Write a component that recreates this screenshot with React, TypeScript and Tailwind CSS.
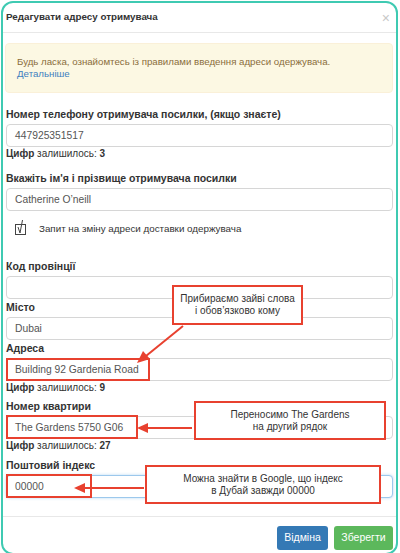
import React from "react";

const font = { fontFamily: '"Liberation Sans", Arial, sans-serif' };

function Label({ children, className = "" }: { children: React.ReactNode; className?: string }) {
  return (
    <div className={`h-[14px] text-[10.5px] leading-[14px] font-bold text-[#333] ${className}`}>
      {children}
    </div>
  );
}

function Input({
  value,
  className = "",
  focused = false,
}: {
  value?: string;
  className?: string;
  focused?: boolean;
}) {
  return (
    <div
      className={`h-[23px] rounded-[4px] border bg-white px-[8px] flex items-center text-[10.3px] text-[#555] ${
        focused
          ? "border-[#9cc8ec] shadow-[0_0_3px_rgba(102,175,233,0.5)]"
          : "border-[#d6d6d6]"
      } ${className}`}
    >
      {value}
    </div>
  );
}

function Hint({ n }: { n: number }) {
  return (
    <div className="h-[14px] text-[10px] leading-[14px] text-[#333]">
      <b>Цифр</b> залишилось: <b>{n}</b>
    </div>
  );
}

function Note({ lines, className }: { lines: string[]; className: string }) {
  return (
    <div
      className={`absolute border-2 border-[#e8412f] bg-white flex flex-col items-center justify-center text-[10px] leading-[12px] text-[#333] ${className}`}
    >
      {lines.map((l) => (
        <span key={l}>{l}</span>
      ))}
    </div>
  );
}

export default function App() {
  return (
    <div className="w-[400px] h-[553px] bg-white overflow-hidden" style={font}>
      <div className="relative ml-[1px] mt-[1px] w-[397px] h-[554px] rounded-[12px] border-2 border-[#3fcab2] bg-white overflow-hidden">
        {/* header */}
        <div className="h-[30px] flex items-center justify-between px-[3px] border-b border-[#e8e8e8]">
          <span className="text-[9.8px] font-bold text-[#333]">Редагувати адресу отримувача</span>
          <span className="text-[14px] leading-none text-[#c8c8c8] mr-[3px]">×</span>
        </div>

        <div className="px-[3px]">
          {/* alert */}
          <div className="mt-[10px] ml-[-1px] h-[50px] rounded-[4px] border border-[#faf0d8] bg-[#fcf8e3] pl-[11px] flex flex-col justify-center text-[9.7px] leading-[12px]">
            <span className="text-[#8a6d3b]">Будь ласка, ознайомтесь із правилами введення адреси одержувача.</span>
            <span className="text-[#3f7fbf]">Детальніше</span>
          </div>

          <Label className="mt-[14px]">Номер телефону отримувача посилки, (якщо знаєте)</Label>
          <Input className="mt-[3px]" value="447925351517" />
          <Hint n={3} />

          <Label className="mt-[10px]">Вкажіть ім'я і прізвище отримувача посилки</Label>
          <Input className="mt-[3px]" value="Catherine O’neill" />

          <div className="mt-[11px] h-[14px] flex items-center text-[9.8px] text-[#333]">
            <svg width="14" height="18" viewBox="0 0 14 18" className="ml-[8px] mb-[2px]">
              <rect x="1.5" y="5.5" width="10" height="10" fill="none" stroke="#444" strokeWidth="1" />
              <path d="M4 8 L6 14 L8.5 1" fill="none" stroke="#444" strokeWidth="1" />
            </svg>
            <span className="ml-[11px]">Запит на зміну адреси доставки одержувача</span>
          </div>

          <Label className="mt-[23px]">Код провінції</Label>
          <Input className="mt-[3px]" />

          <Label className="mt-[1px]">Місто</Label>
          <Input className="mt-[3px]" value="Dubai" />

          <Label className="mt-[1px]">Адреса</Label>
          <Input className="mt-[3px] text-[#333]" value="Building 92 Gardenia Road" />
          <Hint n={9} />

          <Label className="mt-[4px]">Номер квартири</Label>
          <Input className="mt-[3px] text-[#333]" value="The Gardens 5750 G06" />
          <Hint n={27} />

          <Label className="mt-[5px]">Поштовий індекс</Label>
          <Input className="mt-[3px] text-[#333]" value="00000" focused />
        </div>

        {/* footer */}
        <div className="mt-[18px] border-t border-[#e8e8e8] flex justify-end gap-[6px] pt-[9px] pr-[3px]">
          <button className="h-[24px] w-[51px] rounded-[3px] bg-[#3479b5] text-[10.5px] text-white">Відміна</button>
          <button className="h-[24px] w-[59px] rounded-[3px] bg-[#5cb85c] text-[10.5px] text-white">Зберегти</button>
        </div>

        {/* annotations */}
        <div className="absolute left-[3px] top-[355px] w-[144px] h-[23px] border-2 border-[#e8412f]" />
        <div className="absolute left-[3px] top-[412px] w-[132px] h-[24px] border-2 border-[#e8412f]" />
        <div className="absolute left-[3px] top-[471px] w-[86px] h-[24px] border-2 border-[#e8412f]" />

        <Note className="left-[169px] top-[282px] w-[131px] h-[40px]" lines={["Прибираємо зайві слова", "і обов’язково кому"]} />
        <Note className="left-[191px] top-[398px] w-[192px] h-[39px]" lines={["Переносимо The Gardens", "на другий рядок"]} />
        <Note className="left-[142px] top-[462px] w-[236px] h-[39px]" lines={["Можна знайти в Google, що індекс", "в Дубай завжди 00000"]} />

        <svg className="absolute left-0 top-0 pointer-events-none" width="397" height="553">
          <g stroke="#e8412f" strokeWidth="2" fill="#e8412f">
            <line x1="180" y1="323" x2="143" y2="353" />
            <polygon points="134,360 140,348 147,356" stroke="none" />
            <line x1="189" y1="425" x2="144" y2="425" />
            <polygon points="134,425 145,420 145,430" stroke="none" />
            <line x1="141" y1="485" x2="81" y2="485" />
            <polygon points="71,485 82,480 82,490" stroke="none" />
          </g>
        </svg>
      </div>
    </div>
  );
}
